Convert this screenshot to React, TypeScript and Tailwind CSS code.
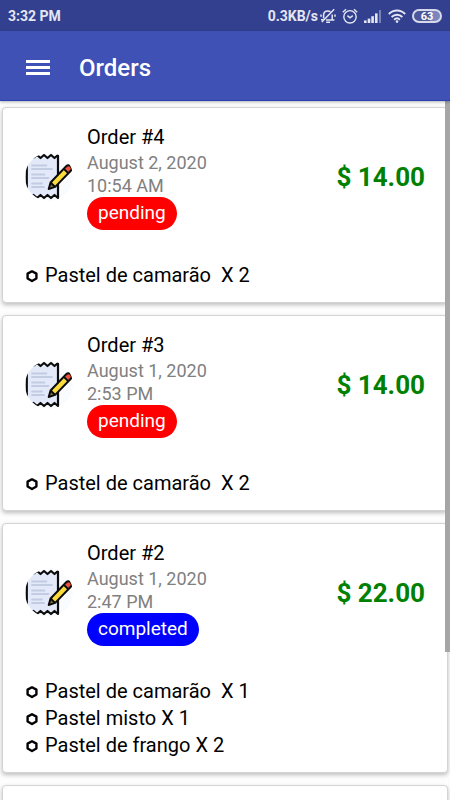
type Order = {
  id: number
  date: string
  time: string
  status: 'pending' | 'completed'
  total: string
  items: { name: string; qty: number }[]
}

const orders: Order[] = [
  {
    id: 4,
    date: 'August 2, 2020',
    time: '10:54 AM',
    status: 'pending',
    total: '14.00',
    items: [{ name: 'Pastel de camarão ', qty: 2 }],
  },
  {
    id: 3,
    date: 'August 1, 2020',
    time: '2:53 PM',
    status: 'pending',
    total: '14.00',
    items: [{ name: 'Pastel de camarão ', qty: 2 }],
  },
  {
    id: 2,
    date: 'August 1, 2020',
    time: '2:47 PM',
    status: 'completed',
    total: '22.00',
    items: [
      { name: 'Pastel de camarão ', qty: 1 },
      { name: 'Pastel misto', qty: 1 },
      { name: 'Pastel de frango', qty: 2 },
    ],
  },
]

const statusColor = {
  pending: 'bg-[#ff0000]',
  completed: 'bg-[#0000ff]',
}

const cardClass =
  'rounded-sm border border-[#d4d4d4] bg-white px-[22px] pt-4 pb-[13px] shadow-[0_2px_4px_rgba(0,0,0,0.25)]'

function BellOffIcon() {
  return (
    <svg viewBox="0 0 16 16" className="h-4 w-4" fill="none" stroke="currentColor" strokeWidth="1.5">
      <path d="M3.6 10.600V7C3.600 4.500 5.400 2.900 7.800 2.900c1 0 1.900.3 2.600.8M12.200 6.400v5.400M6 12h8.400M1 11.800h2.200" />
      <path d="M14.200 1.200 1.800 14M6.200 14.200h3.800" />
      <path d="M1 6.400v2.400M15 6.400v2.400" />
    </svg>
  )
}

function AlarmIcon() {
  return (
    <svg viewBox="0 0 16 16" className="h-4 w-4" fill="none" stroke="currentColor" strokeWidth="1.4">
      <circle cx="8" cy="8.8" r="6.2" />
      <path d="M5.400 7.600 8 9.800l2.800-2.200" />
      <path d="M.8 4.200 4 1.200M15.200 4.200 12 1.200" />
    </svg>
  )
}

function SignalIcon() {
  return (
    <svg viewBox="0 0 18 13" className="h-[13px] w-[18px]" fill="currentColor">
      <rect x="0" y="10.400" width="2.600" height="2.600" />
      <rect x="3.700" y="8.600" width="2.600" height="4.400" />
      <rect x="7.300" y="6.200" width="2.600" height="6.800" />
      <rect x="11" y="3.400" width="2.600" height="9.600" />
      <rect x="15" y="0" width="2" height="13" opacity="0.4" />
    </svg>
  )
}

function WifiIcon() {
  return (
    <svg viewBox="0 0 18 14" className="h-[14px] w-[18px]" fill="none" stroke="currentColor" strokeWidth="1.900">
      <path d="M.8 5c4.700-4.700 11.700-4.700 16.400 0" />
      <path d="M3.600 8c3.100-3 7.700-3 10.800 0" />
      <path d="M6.100 10.700c1.700-1.600 4.100-1.600 5.800 0" />
      <circle cx="9" cy="12.600" r="1.300" fill="currentColor" stroke="none" />
    </svg>
  )
}

function StatusBar() {
  return (
    <div className="flex h-[31px] shrink-0 items-center justify-between bg-[#32408f] px-2 pt-px text-sm font-bold text-[#e4e6f2]">
      <span>3:32 PM</span>
      <div className="flex items-center gap-1.5">
        <div className="flex items-center gap-0.5">
          <span>0.3KB/s</span>
          <BellOffIcon />
        </div>
        <AlarmIcon />
        <SignalIcon />
        <WifiIcon />
        <span className="flex h-[14px] w-[30px] items-center justify-center rounded-full border-2 border-[#d6d9ea] bg-[linear-gradient(90deg,#4b5799_60%,#7c86bd_60%)] text-[11px] leading-none text-white">
          63
        </span>
      </div>
    </div>
  )
}

function ReceiptIcon() {
  return (
    <svg viewBox="0 0 48 48" className="h-12 w-12 shrink-0 rounded-full" aria-hidden="true">
      <circle cx="24" cy="24" r="24" fill="#fafbfd" />
      <path
        d="M1.800 4.500 5 2l3.500 2.500L12 2l3.500 3L19 2l3.500 3L26 2l3.500 3L33 2v43l-3.500-3-3.500 3-3.500-3-3.500 3-3.500-3-3.500 3-3.500-3L5 45l-3.200-3z"
        fill="#e3e9f8"
        stroke="#0c0c0c"
        strokeWidth="2.200"
        strokeLinejoin="round"
      />
      <path
        d="M7 12.500h14.500M7 16h20M7 21.500h12.500M7 25h16.500M7 30.500h10M7 34h12"
        stroke="#c2cde4"
        strokeWidth="1.800"
        strokeLinecap="round"
      />
      <g transform="translate(23.700 36) rotate(-46)">
        <path d="M0 0 6-3.200h22.500a3.200 3.200 0 0 1 0 6.400H6z" fill="#fbdc3c" />
        <path d="M26 -3.200h2.500a3.200 3.200 0 0 1 0 6.400H26z" fill="#f0513c" />
        <path d="M0 0 6-3.200V3.200z" fill="#85713a" />
        <path
          d="M0 0 6-3.200h22.500a3.200 3.200 0 0 1 0 6.400H6zM6-3.200V3.200M25-3.200V3.200"
          fill="none"
          stroke="#0c0c0c"
          strokeWidth="2"
          strokeLinejoin="round"
        />
      </g>
    </svg>
  )
}

function HexagonIcon() {
  return (
    <svg viewBox="0 0 12 14" className="h-[14px] w-3 shrink-0" aria-hidden="true">
      <path
        d="M6 2.200 10.400 4.600v4.900L6 12 1.600 9.500V4.600z"
        fill="none"
        stroke="#000"
        strokeWidth="2.400"
        strokeLinejoin="round"
      />
    </svg>
  )
}

function OrderCard({ order }: { order: Order }) {
  return (
    <article className={cardClass}>
      <header className="flex items-center">
        <ReceiptIcon />
        <div className="ml-[14px] flex-1">
          <h2 className="text-xl leading-[27px] text-black">Order #{order.id}</h2>
          <p className="text-lg leading-[23px] text-[#808080]">{order.date}</p>
          <p className="text-lg leading-[23px] text-[#808080]">{order.time}</p>
          <span className={`inline-block h-[33px] rounded-full px-[11px] align-top text-[19px] leading-[31px] text-white ${statusColor[order.status]}`}>
            {order.status}
          </span>
        </div>
        <strong className="text-[26px] leading-8 font-bold text-[#008000]">$ {order.total}</strong>
      </header>
      <ul className="mt-8">
        {order.items.map((item) => (
          <li key={item.name} className="flex items-center gap-[7px] pl-px text-xl leading-[27px] text-black">
            <HexagonIcon />
            <span className="whitespace-pre">
              {item.name} X {item.qty}
            </span>
          </li>
        ))}
      </ul>
    </article>
  )
}

export default function App() {
  return (
    <div className="flex h-screen flex-col overflow-hidden bg-white font-['Roboto',sans-serif]">
      <StatusBar />
      <header className="z-10 flex h-[70px] shrink-0 items-center border-b border-[#2b41b0] bg-[#3f51b5] px-[26px] pt-1 text-white shadow-[0_1px_3px_rgba(0,0,0,0.3)]">
        <button type="button" aria-label="Open menu" className="flex w-6 flex-col gap-[3px]">
          <span className="h-[3px] w-full bg-white" />
          <span className="h-[3px] w-full bg-white" />
          <span className="h-[3px] w-full bg-white" />
        </button>
        <h1 className="ml-[29px] text-2xl font-medium">Orders</h1>
      </header>
      <main className="relative flex-1 overflow-hidden bg-[#fdfdfd]">
        <div className="flex flex-col gap-3 px-0.5 pt-1.5">
          {orders.map((order) => (
            <OrderCard key={order.id} order={order} />
          ))}
          <article className={`${cardClass} h-[196px]`} />
        </div>
        <div className="absolute top-0 right-0 h-[551px] w-[5px] bg-[#a6a6a6]" />
      </main>
    </div>
  )
}
